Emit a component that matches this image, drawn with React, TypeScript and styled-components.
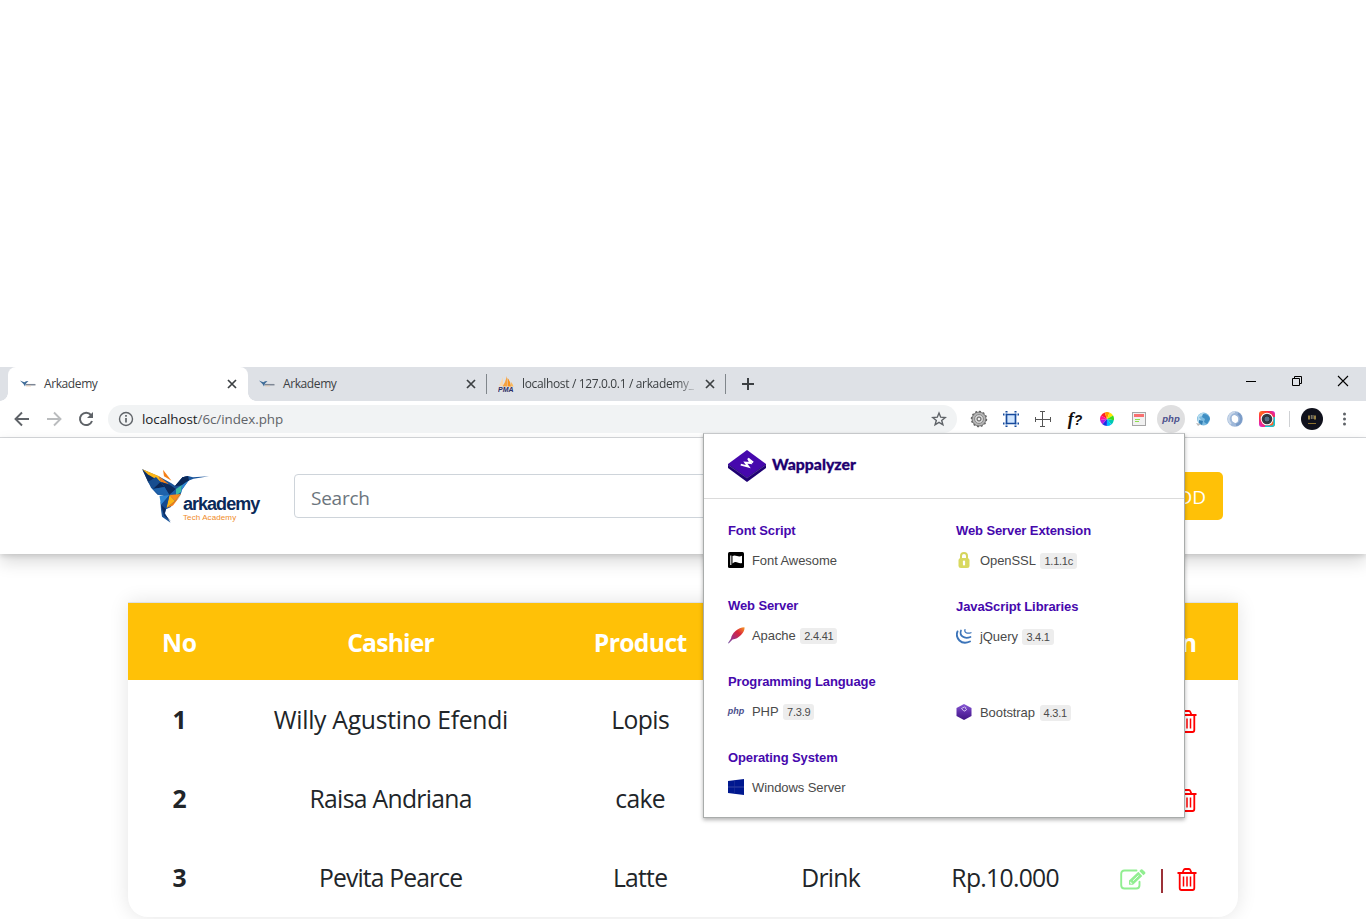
import React from 'react';
import styled, { createGlobalStyle, css } from 'styled-components';

const Global = createGlobalStyle`
  * { box-sizing: border-box; }
  html, body { margin: 0; padding: 0; background: #fff; overflow: hidden; }
  svg { display: block; flex: none; }
`;

const ui = `'Open Sans', 'Noto Sans', sans-serif`;
const arial = `'Liberation Sans', Arial, sans-serif`;

const Screen = styled.div`
  position: relative;
  width: 1366px;
  height: 919px;
  padding-top: 367px;
  overflow: hidden;
  background: #fff;
  font-family: ${ui};
`;

const Text = styled.span<{ $track?: number }>`
  white-space: nowrap;
  letter-spacing: ${p => p.$track ?? 0}px;
  margin-right: ${p => -(p.$track ?? 0)}px;
`;

/* ---------- tab strip ---------- */
const TabStrip = styled.div`
  display: flex;
  height: 34px;
  padding-left: 8px;
  background: #dee1e6;
`;

const Tab = styled.div<{ $active?: boolean; $divider?: boolean; $width: number }>`
  position: relative;
  display: flex;
  align-items: center;
  width: ${p => p.$width}px;
  height: 34px;
  padding: 0 11px 0 ${p => (p.$active ? 12 : 11)}px;
  font-size: 12px;
  color: #3c4043;
  ${p => p.$active && css`
    background: #fff;
    border-radius: 8px 8px 0 0;
    &::before, &::after {
      content: '';
      position: absolute;
      bottom: 0;
      width: 8px;
      height: 8px;
    }
    &::before { left: -8px; background: radial-gradient(circle at 0 0, #dee1e6 7.5px, #fff 8px); }
    &::after { right: -8px; background: radial-gradient(circle at 100% 0, #dee1e6 7.5px, #fff 8px); }
  `}
  ${p => p.$divider && css`
    &::after {
      content: '';
      position: absolute;
      right: 0;
      top: 7px;
      width: 1px;
      height: 20px;
      background: #80868b;
    }
  `}
`;

const TabTitle = styled.div<{ $fade?: boolean }>`
  flex: 1;
  min-width: 0;
  height: 18px;
  margin: 0 8px;
  line-height: 18px;
  ${p => p.$fade && css`mask-image: linear-gradient(90deg, #000 155px, transparent 177px);`}
`;

const NewTab = styled.div`
  display: flex;
  align-items: center;
  margin-left: 16px;
`;

const WindowButtons = styled.div`
  display: flex;
  margin-left: auto;
  padding-top: 8px;
  height: 20px;
`;

const WindowButton = styled.div`
  display: flex;
  justify-content: center;
  width: 46px;
`;

/* ---------- toolbar ---------- */
const Toolbar = styled.div`
  display: flex;
  align-items: center;
  height: 37px;
  padding-left: 14px;
  background: #fff;
  border-bottom: 1px solid #d9dbde;
`;

const NavIcons = styled.div`
  display: flex;
  gap: 16px;
  width: 94px;
`;

const Omnibox = styled.div`
  display: flex;
  align-items: center;
  width: 849px;
  height: 28px;
  padding: 0 10px;
  border-radius: 14px;
  background: #f1f3f4;
  font-size: 13.4px;
  color: #5f6368;
  b { font-weight: 400; color: #202124; }
`;

const Url = styled.div`
  flex: 1;
  margin-left: 8px;
  line-height: 20px;
`;

const Extensions = styled.div`
  display: flex;
  align-items: center;
  margin-left: 6px;
`;

const Extension = styled.div<{ $on?: boolean }>`
  display: flex;
  align-items: center;
  justify-content: center;
  width: ${p => (p.$on ? 28 : 32)}px;
  height: 28px;
  margin: 0 ${p => (p.$on ? 2 : 0)}px;
  border-radius: 14px;
  background: ${p => (p.$on ? '#dfdfe0' : 'transparent')};
`;

const FontGlyph = styled.span`
  font: italic 700 18px/16px 'Liberation Serif', serif;
  color: #111;
  i { font: italic 700 14px/16px ${arial}; }
`;

const PhpMark = styled.span<{ $size: number }>`
  font: italic 700 ${p => p.$size}px/14px ${arial};
  color: #4a4f8c;
`;

const Separator = styled.div`
  width: 1px;
  height: 16px;
  margin: 0 11px 0 6px;
  background: #cfd1d4;
`;

const MenuDots = styled.div`
  margin-left: 19px;
`;

/* ---------- page ---------- */
const Navbar = styled.header`
  display: flex;
  align-items: center;
  height: 116px;
  padding: 0 143px 0 142px;
  background: #fff;
  box-shadow: 0 8px 16px rgba(0, 0, 0, .15), 0 2px 5px rgba(0, 0, 0, .12);
`;

const Brand = styled.div`
  display: flex;
  width: 152px;
  height: 56px;
  padding-top: 1px;
`;

const BrandText = styled.div`
  display: flex;
  flex-direction: column;
  margin: 25px 0 0 -27px;
  font-family: ${arial};
`;

const BrandName = styled.div`
  font-size: 18px;
  line-height: 20px;
  font-weight: 700;
  color: #0b2a59;
`;

const BrandSub = styled.div`
  font-size: 8px;
  line-height: 9px;
  margin-top: -1px;
  color: #f08b27;
`;

const SearchBox = styled.div`
  width: 760px;
  height: 44px;
  padding-left: 16px;
  border: 1px solid #ced4da;
  border-radius: 4px;
  font-size: 19px;
  line-height: 46px;
  color: #6c757d;
`;

const AddButton = styled.div`
  width: 120px;
  height: 48px;
  margin-left: auto;
  padding-right: 17px;
  border-radius: 5px;
  background: #ffc107;
  color: #fff;
  font-size: 19px;
  line-height: 50px;
  text-align: right;
`;

const Card = styled.section`
  width: 1110px;
  height: 315px;
  margin: 48px auto 0;
  border-top: 1px solid #dee2e6;
  border-radius: 0 0 20px 20px;
  background: #fff;
  box-shadow: 0 0 20px rgba(0, 0, 0, .11);
`;

const Row = styled.div<{ $head?: boolean }>`
  display: grid;
  grid-template-columns: 103px 320px 179px 202px 147px 159px;
  align-items: center;
  justify-items: center;
  height: ${p => (p.$head ? 77 : 79)}px;
  padding-top: ${p => (p.$head ? 2 : 0)}px;
  background: ${p => (p.$head ? '#ffc107' : 'transparent')};
  color: ${p => (p.$head ? '#fff' : '#212529')};
  font-size: 24.7px;
  font-weight: ${p => (p.$head ? 700 : 400)};
  line-height: 38px;
`;

const Strong = styled(Text)`font-weight: 700;`;

const Actions = styled.div`
  display: flex;
  grid-column: 6;
  align-items: center;
  gap: 14px;
  margin: 4px 1px 0 0;
`;

const HeadAction = styled(Text)`grid-column: 6;`;

const Bar = styled.div`
  width: 2px;
  height: 24px;
  margin: 3px 0 0 1px;
  background: #9c3138;
`;

/* ---------- popup ---------- */
const Popup = styled.aside`
  position: absolute;
  left: 703px;
  top: 433px;
  width: 482px;
  height: 385px;
  border: 1px solid #a9acab;
  border-top-color: #c6c8ca;
  background: #fff;
  box-shadow: 0 2px 4px rgba(0, 0, 0, .3);
  font-family: ${arial};
`;

const PopupHead = styled.div`
  display: flex;
  align-items: center;
  gap: 6px;
  height: 65px;
  padding: 0 0 2px 24px;
  border-bottom: 1px solid #dbdbdb;
`;

const Wordmark = styled.div`
  margin-top: -2px;
  font: 900 15.8px/20px Lato, sans-serif;
  color: #1e0070;
  -webkit-text-stroke: .3px #1e0070;
`;

const PopupBody = styled.div`
  display: grid;
  grid-template-columns: 228px 228px;
  padding: 23px 0 0 24px;
`;

const Column = styled.div<{ $step: number }>`
  display: grid;
  grid-auto-rows: ${p => p.$step}px;
  align-content: start;
  margin-top: ${p => (p.$step < 76 ? -0.1 : 0)}px;
`;

const Category = styled.div``;

const CategoryName = styled.div`
  height: 16px;
  font-size: 13px;
  line-height: 17px;
  font-weight: 700;
  color: #4608ad;
`;

const Tech = styled.div`
  display: flex;
  align-items: center;
  height: 16px;
  margin-top: 14px;
  font-size: 13px;
  color: #4a4a4a;
`;

const TechName = styled(Text)`
  align-self: flex-start;
  margin-top: 1px;
  line-height: 15px;
`;

const TechIcon = styled.div`
  display: flex;
  justify-content: center;
  align-items: center;
  width: 16px;
  height: 16px;
  margin-right: 8px;
`;

const Version = styled.span`
  height: 16px;
  margin: 1px 0 0 4.5px;
  padding: 0 4px;
  border-radius: 3px;
  background: #ededed;
  font-size: 11px;
  letter-spacing: -.22px;
  line-height: 16px;
`;

const CloseIcon = () => (
  <svg width="10" height="10" viewBox="0 0 10 10"><path d="M1 1l8 8M9 1L1 9" stroke="#3c4043" strokeWidth="1.7" /></svg>
);

const BirdFavicon = () => (
  <svg width="16" height="16" viewBox="0 0 16 16">
    <path d="M0 4.5l3 1.200 1.500.6 1.500-1.100 2.500-.2L6 7.500 5 10.500 3.500 8z" fill="#3f6c98" />
    <path d="M6 8.700h9.500" stroke="#7e8795" strokeWidth="1.500" />
    <path d="M6 10h5" stroke="#e9c9a9" strokeWidth=".7" />
  </svg>
);

const PmaFavicon = () => (
  <svg width="16" height="16" viewBox="0 0 16 16">
    <path d="M5 1L1 10h4z" fill="#fbd9ac" /><path d="M9 0Q7.500 6 4.500 10.500H9z" fill="#f6a340" />
    <path d="M9.500 2q3 3 3.500 8.500H9.500z" fill="#f7931e" /><path d="M13 6q2 2 2.500 4.500H13z" fill="#f9b95f" />
    <text x="0" y="16" fontSize="6.500" fontWeight="700" fontStyle="italic" fontFamily="Liberation Sans" fill="#2d2d63" textLength="15.500" lengthAdjust="spacingAndGlyphs">PMA</text>
  </svg>
);

const GearIcon = () => (
  <svg width="18" height="18" viewBox="0 0 18 18">
    <circle cx="9" cy="9" r="7" fill="#b5b5b5" stroke="#777" />
    <circle cx="9" cy="9" r="7.500" fill="none" stroke="#666" strokeWidth="1.400" strokeDasharray="2 1.900" />
    <circle cx="9" cy="9" r="4.500" fill="#d4d4d4" stroke="#8a8a8a" />
    <circle cx="9" cy="9" r="2" fill="#eee" stroke="#555" />
  </svg>
);

const GridIcon = () => (
  <svg width="16" height="16" viewBox="0 0 16 16">
    <rect x="3" y="3" width="10" height="10" fill="#cfe5ff" />
    <path d="M3 3.500h10M3 12.500h10M3.500 3v10M12.500 3v10" stroke="#174a9c" strokeWidth="1.700" />
    <path d="M0 2.500v2M0 11.500v2M16 2.500v2M16 11.500v2M2.500 0h2M11.500 0h2M2.500 16h2M11.500 16h2" stroke="#174a9c" strokeWidth="3" />
    <path d="M1.500 3.500H3M13 3.500h1.500M1.500 12.500H3M13 12.500h1.500M3.500 1.500V3M12.500 1.500V3M3.500 13v1.500M12.500 13v1.500" stroke="#7fa3d6" strokeWidth="1.500" />
  </svg>
);

const CrossIcon = () => (
  <svg width="16" height="16" viewBox="0 0 16 16" fill="none" stroke="#555" strokeWidth="1">
    <path d="M7.500 1v14M1 8.500h14M5 .5h5M5 15.500h5M.5 6v5M15.500 6v5" />
  </svg>
);

const wheel = ['#f22', '#ff9800', '#ffe600', '#3ddc1c', '#00c9b1', '#0bf', '#1733e6', '#b01de0', '#ff1493'];
const WheelIcon = () => (
  <svg width="14" height="14" viewBox="-7 -7 14 14">
    {wheel.map((c, i) => {
      const a = (i * 2 * Math.PI) / 9 - 2.6;
      const b = a + (2 * Math.PI) / 9;
      return <path key={c} fill={c} d={`M0 0L${7 * Math.cos(a)} ${7 * Math.sin(a)}A7 7 0 0 1 ${7 * Math.cos(b)} ${7 * Math.sin(b)}Z`} />;
    })}
  </svg>
);

const FormIcon = () => (
  <svg width="14" height="14" viewBox="0 0 14 14">
    <rect x=".5" y=".5" width="13" height="13" fill="#f1f1f1" stroke="#a5a5a5" />
    <rect x="2" y="2" width="10" height="3" fill="#f87070" />
    <path d="M3 7.500h5M3 9.500h4" stroke="#8ee04c" strokeWidth="1.200" />
  </svg>
);

const EarthIcon = () => (
  <svg width="14" height="15" viewBox="0 0 14 15">
    <circle cx="7.500" cy="7" r="6.500" fill="#7dbbe0" />
    <path d="M2 4q3-4 6-3L6 4 3 5l2 3-2 3Q1 8 2 4z" fill="#b5dcef" />
    <path d="M7 2q6 0 7 5l-3 5-3-2 1-3-3-2z" fill="#3f8fc4" /><path d="M3 8l4 1-1 4-3-2z" fill="#3580b4" />
    <path d="M0 11l5 1-3 2z" fill="#bbb" />
  </svg>
);

const SwirlIcon = () => (
  <svg width="16" height="16" viewBox="0 0 16 16" fill="none">
    <circle cx="8" cy="8" r="5.500" stroke="#9fb8d9" strokeWidth="4.600" />
    <path d="M8 1a7 7 0 0 0-4 12" stroke="#c9d7e9" strokeWidth="2" />
    <path d="M11 2.500a6.300 6.300 0 0 1-2 11.500" stroke="#7b9cc8" strokeWidth="2.500" />
    <ellipse cx="7.800" cy="8" rx="2.800" ry="4" fill="#fff" transform="rotate(-20 8 8)" />
  </svg>
);

const CameraIcon = () => (
  <svg width="16" height="16" viewBox="0 0 16 16">
    <defs><linearGradient id="cam" x1="1" y1="0" x2="0" y2="1">
      <stop offset="0" stopColor="#c92bee" /><stop offset=".25" stopColor="#ff2b3b" /><stop offset=".5" stopColor="#ff6a1f" />
      <stop offset=".7" stopColor="#ff2b4b" /><stop offset="1" stopColor="#d327e6" />
    </linearGradient></defs>
    <rect width="16" height="16" rx="3" fill="url(#cam)" />
    <path d="M15.200 6v6.500q0 2.700-2.700 2.700H6" fill="none" stroke="#12c9d6" strokeWidth="1.600" />
    <circle cx="8" cy="8" r="6.300" fill="#fff" /><circle cx="8" cy="8" r="5.300" fill="#363b44" />
    <circle cx="8" cy="8" r="3" fill="#566f86" stroke="#23272f" strokeWidth=".8" />
  </svg>
);

const Avatar = () => (
  <svg width="22" height="22" viewBox="0 0 22 22">
    <circle cx="11" cy="11" r="11" fill="#10111c" />
    <path d="M8 7.500v4M14 7.500v4" stroke="#e3bf57" strokeWidth="1.300" /><path d="M10.300 7v4M12 7v4" stroke="#8f8a78" />
    <path d="M7 15.500h8" stroke="#8d7230" />
  </svg>
);

const ArkademyBird = () => (
  <svg width="68" height="56" viewBox="0 0 68 56">
    <path d="M.3.3L17 7.500 29 14l4 3 7.500-8.700L46 7l5 1.200 16-1-15.500 2.600-5 2-6.500 9-1.500 5-10 12.500-4.500 2-1 4 5.500 9.500-8.500-6-1-7-.5-7.500 3-6.500-6-1-6.500-7z" fill="#1a559b" />
    <path d="M.3.3L6 13l8-4z" fill="#0d2f63" /><path d="M.3.3L16.700 7 19 13 6 5.500z" fill="#fdb515" />
    <path d="M16.700 7l10.500 8.500-8.200-2.500z" fill="#f57f17" /><path d="M21 .8l8.500 11-7.500-4.500z" fill="#f57f17" />
    <path d="M6 13l8-5 4.500 5-7.500 7z" fill="#184d8f" /><path d="M11 20l7.500-7 4 5z" fill="#0b2656" />
    <path d="M19 13l8.200 2.500L34 20l-7 6-4.500-8z" fill="#0c2a5d" /><path d="M11 20l11.500-2L27.500 26h-10z" fill="#1e62ab" />
    <path d="M29 14l4 3 7.500-8.700L46 7l-3 6-9 6z" fill="#14488a" />
    <path d="M40.500 8.300L46 7l1 4.500-7 5-7 .5z" fill="#0b2858" />
    <path d="M34 20l6-4-1 7-5 3.500z" fill="#3dbba6" /><path d="M40 16l6.500-4.500L40 20.500 38.500 26z" fill="#2f86d2" />
    <path d="M27.500 26L34 20v6.500z" fill="#1d5ba5" />
    <path d="M17.500 27L27.500 26 19 36z" fill="#2f86d2" /><path d="M27.500 26l11.500-1-6 7z" fill="#f98c1b" />
    <path d="M27.500 26l5.500 6-8.500 7z" fill="#fdb515" /><path d="M33 32l6-6-8 10.500-6.500 2.500z" fill="#f57f17" />
    <path d="M27.500 26L19 36l5 4z" fill="#154b91" />
    <path d="M19 36l5 4-1.500 5 6.500 7.500-7-6z" fill="#0c2a5d" />
  </svg>
);

const WappalyzerMark = () => (
  <svg width="38" height="33" viewBox="0 0 38 33">
    <path d="M0 15v4l19 14 19-14v-4z" fill="#1f0073" />
    <path d="M0 15.800L19 29l19-13.200" stroke="#fff" strokeOpacity=".45" strokeWidth=".5" fill="none" />
    <path d="M19 1L38 15 19 28.500 0 15z" fill="#4608ad" />
    <path d="M12.500 14.500l7 3.500-2-4.500 5 1.500-1.500-5 4 5" transform="rotate(-12 18 14)" fill="none" stroke="#fff" strokeWidth="2" />
  </svg>
);

const FontAwesomeIcon = () => (
  <svg width="16" height="16" viewBox="0 0 16 16"><rect width="16" height="16" rx="1.500" fill="#000" />
    <path d="M4.500 4q2-1 4.500 0t5-.2v7.200q-2 .6-4.500-.5T4.500 11.500z" fill="#fff" /><path d="M2.800 3.500v9.500" stroke="#fff" strokeWidth="1.100" /></svg>
);
const ApacheIcon = () => (
  <svg width="17" height="17" viewBox="0 0 17 17">
    <defs><linearGradient id="fea" x1="1" y1="0" x2="0" y2="1"><stop offset="0" stopColor="#f79a23" /><stop offset=".35" stopColor="#d9253c" /><stop offset=".7" stopColor="#9e2f83" /><stop offset="1" stopColor="#7b62ab" /></linearGradient></defs>
    <path d="M16.500.3q.5 3.700-3.500 7.700T4.500 12.500L.7 16.500 0 16l3-4.500q.500-4 4.500-7.500t9-3.700z" fill="url(#fea)" />
  </svg>
);
const LockIcon = () => (
  <svg width="12" height="16" viewBox="0 0 12 16"><path d="M3 7V4a3 3 0 0 1 6 0v3" fill="none" stroke="#d5d55c" strokeWidth="2" />
    <rect x=".5" y="6" width="11" height="10" rx="2.500" fill="#d9d95f" /><path d="M6 9.500v3" stroke="#fff" strokeWidth="2.200" strokeLinecap="round" /></svg>
);
const JQueryIcon = () => (
  <svg width="16" height="16" viewBox="0 0 16 16" fill="none" stroke="#3c74b9" strokeLinecap="round">
    <path d="M1.500 3.500C-1 10 5 17.500 14 13.500" strokeWidth="1.900" /><path d="M5 2.500c-2 5 3 9 9.500 6.500" strokeWidth="1.700" />
    <path d="M9 1.500c-1 3 2 4.500 6 3.200" strokeWidth="1.200" />
  </svg>
);
const BootstrapIcon = () => (
  <svg width="16" height="16" viewBox="0 0 16 16">
    <defs><linearGradient id="boot" x1="0" y1="0" x2="0" y2="1"><stop offset="0" stopColor="#8a5bd6" /><stop offset=".5" stopColor="#5f2eaa" /><stop offset="1" stopColor="#3f1583" /></linearGradient></defs>
    <path d="M8 0l7.500 4v8L8 16 .5 12V4z" fill="url(#boot)" />
    <path d="M5.500 4.500l3-1.500q2 .3 1 1.700 2 .3.500 1.600l-2 .9z" stroke="#d6c6f2" strokeWidth=".9" fill="none" /></svg>
);
const WindowsIcon = () => (
  <svg width="16" height="16" viewBox="0 0 16 16"><path d="M0 2L16 0v16L0 14z" fill="#00188f" /><path d="M0 8h16" stroke="#3a4ba6" strokeWidth=".9" /><path d="M6.500 1v14" stroke="#26389b" strokeWidth=".5" /></svg>
);

const EditIcon = () => (
  <svg width="26" height="21" viewBox="0 0 26 21">
    <path d="M16.500 1.500h-12Q1.200 1.500 1.200 4.800v11.400q0 3.300 3.300 3.300h11.700q3.300 0 3.300-3.300v-3.400" fill="none" stroke="#90ee90" strokeWidth="1.900" strokeLinecap="round" />
    <path d="M9 15.800v-4.300L18.300 2.800l4 4.200-9.300 8.800z" fill="#90ee90" />
    <path d="M19.300 1.900l1.500-1.400q.8-.6 1.600 0l2.700 2.600q.6.900 0 1.600l-1.700 1.500z" fill="#90ee90" />
    <path d="M13 11.800l5.500-5.300M10.700 12.800v1.500h1.500" stroke="#fff" strokeWidth=".9" fill="none" />
  </svg>
);

const TrashIcon = () => (
  <svg width="20" height="23" viewBox="0 0 20 23" fill="none" stroke="#f00" strokeWidth="1.800">
    <path d="M.5 5h19M5.500 5l1.200-3q.4-1 1.300-1h4q.9 0 1.300 1l1.200 3M2.700 5v15q0 2 1.800 2h11q1.800 0 1.800-2V5" />
    <path d="M6.500 8.500v10M10 8.500v10M13.500 8.500v10" strokeWidth="1.500" />
  </svg>
);

type TechInfo = { category?: string; name: string; version?: string; icon: React.ReactNode };

const leftTech: TechInfo[] = [
  { category: 'Font Script', name: 'Font Awesome', icon: <FontAwesomeIcon /> },
  { category: 'Web Server', name: 'Apache', version: '2.4.41', icon: <ApacheIcon /> },
  { category: 'Programming Language', name: 'PHP', version: '7.3.9', icon: <PhpMark $size={9}>php</PhpMark> },
  { category: 'Operating System', name: 'Windows Server', icon: <WindowsIcon /> },
];
const rightTech: TechInfo[] = [
  { category: 'Web Server Extension', name: 'OpenSSL', version: '1.1.1c', icon: <LockIcon /> },
  { category: 'JavaScript Libraries', name: 'jQuery', version: '3.4.1', icon: <JQueryIcon /> },
  { name: 'Bootstrap', version: '4.3.1', icon: <BootstrapIcon /> },
];

const TechColumn = ({ items, step }: { items: TechInfo[]; step: number }) => (
  <Column $step={step}>
    {items.map(t => (
      <Category key={t.name}>
        <CategoryName><Text $track={-0.1}>{t.category}</Text></CategoryName>
        <Tech><TechIcon>{t.icon}</TechIcon><TechName $track={-0.08}>{t.name}</TechName>{t.version && <Version>{t.version}</Version>}</Tech>
      </Category>
    ))}
  </Column>
);

const ActionCell = () => (
  <Actions><EditIcon /><Bar /><TrashIcon /></Actions>
);

export default function App() {
  return (
    <Screen>
      <Global />
      <TabStrip>
        <Tab $active $width={240}><BirdFavicon /><TabTitle><Text $track={-0.4}>Arkademy</Text></TabTitle><CloseIcon /></Tab>
        <Tab $divider $width={239}><BirdFavicon /><TabTitle><Text $track={-0.4}>Arkademy</Text></TabTitle><CloseIcon /></Tab>
        <Tab $divider $width={239}><PmaFavicon /><TabTitle $fade><Text $track={-0.35}>localhost / 127.0.0.1 / arkademy_</Text></TabTitle><CloseIcon /></Tab>
        <NewTab><svg width="12" height="12" viewBox="0 0 12 12"><path d="M6 0v12M0 6h12" stroke="#3c4043" strokeWidth="2" /></svg></NewTab>
        <WindowButtons>
          <WindowButton><svg width="10" height="12"><path d="M0 6.500h10" stroke="#000" /></svg></WindowButton>
          <WindowButton><svg width="11" height="12" fill="none" stroke="#000"><path d="M.5 3.500h7v7h-7zM2.500 3.500v-2h7v7h-2" /></svg></WindowButton>
          <WindowButton><svg width="12" height="12" stroke="#000" strokeWidth="1.100"><path d="M1 1l10 10M11 1L1 11" /></svg></WindowButton>
        </WindowButtons>
      </TabStrip>
      <Toolbar>
        <NavIcons>
          <svg width="16" height="16" viewBox="0 0 16 16" fill="none" stroke="#5f6368" strokeWidth="1.900"><path d="M15 8H2M8 1.500L1.500 8 8 14.500" /></svg>
          <svg width="16" height="16" viewBox="0 0 16 16" fill="none" stroke="#babcbe" strokeWidth="1.900"><path d="M1 8h13M8 1.500L14.500 8 8 14.500" /></svg>
          <svg width="16" height="16" viewBox="0 0 16 16" fill="none" stroke="#5f6368" strokeWidth="2"><path d="M13 4A6.200 6.200 0 1 0 14 10" /><path d="M15 1v6H9z" fill="#5f6368" stroke="none" /></svg>
        </NavIcons>
        <Omnibox>
          <svg width="16" height="16" viewBox="0 0 16 16" fill="none" stroke="#5f6368"><circle cx="8" cy="8" r="6.500" strokeWidth="1.400" /><path d="M8 7v4.500M8 4v1.700" strokeWidth="1.700" /></svg>
          <Url><Text $track={-0.06}><b>localhost</b>/6c/index.php</Text></Url>
          <svg width="16" height="16" viewBox="0 0 16 16" fill="none" stroke="#5f6368" strokeWidth="1.400"><path d="M8 2l1.700 4.200 4.500.3-3.500 2.900 1.200 4.400L8 11.300l-3.900 2.500 1.200-4.400-3.500-2.900 4.500-.3z" /></svg>
        </Omnibox>
        <Extensions>
          <Extension><GearIcon /></Extension>
          <Extension><GridIcon /></Extension>
          <Extension><CrossIcon /></Extension>
          <Extension><FontGlyph>f<i>?</i></FontGlyph></Extension>
          <Extension><WheelIcon /></Extension>
          <Extension><FormIcon /></Extension>
          <Extension $on><PhpMark $size={9.5}>php</PhpMark></Extension>
          <Extension><EarthIcon /></Extension>
          <Extension><SwirlIcon /></Extension>
          <Extension><CameraIcon /></Extension>
          <Separator />
          <Avatar />
          <MenuDots><svg width="5" height="14" fill="#5f6368"><circle cx="2.500" cy="2" r="1.500" /><circle cx="2.500" cy="7" r="1.500" /><circle cx="2.500" cy="12" r="1.500" /></svg></MenuDots>
        </Extensions>
      </Toolbar>

      <Navbar>
        <Brand>
          <ArkademyBird />
          <BrandText>
            <BrandName><Text $track={-0.98}>arkademy</Text></BrandName>
            <BrandSub><Text $track={0.1}>Tech Academy</Text></BrandSub>
          </BrandText>
        </Brand>
        <SearchBox><Text $track={-0.25}>Search</Text></SearchBox>
        <AddButton>ADD</AddButton>
      </Navbar>

      <Card>
        <Row $head>
          <Text $track={-0.4}>No</Text><Text $track={-0.8}>Cashier</Text><Text $track={-0.65}>Product</Text>
          <HeadAction $track={-0.5}>Action</HeadAction>
        </Row>
        <Row>
          <Strong>1</Strong><Text $track={-0.27}>Willy Agustino Efendi</Text><Text $track={-0.6}>Lopis</Text>
          <ActionCell />
        </Row>
        <Row>
          <Strong>2</Strong><Text $track={-0.68}>Raisa Andriana</Text><Text $track={-0.7}>cake</Text>
          <ActionCell />
        </Row>
        <Row>
          <Strong>3</Strong><Text $track={-0.85}>Pevita Pearce</Text><Text $track={-0.75}>Latte</Text>
          <Text $track={-0.75}>Drink</Text><Text $track={-0.7}>Rp.10.000</Text><ActionCell />
        </Row>
      </Card>

      <Popup>
        <PopupHead><WappalyzerMark /><Wordmark><Text>Wappalyzer</Text></Wordmark></PopupHead>
        <PopupBody>
          <TechColumn items={leftTech} step={75.55} />
          <TechColumn items={rightTech} step={76} />
        </PopupBody>
      </Popup>
    </Screen>
  );
}
